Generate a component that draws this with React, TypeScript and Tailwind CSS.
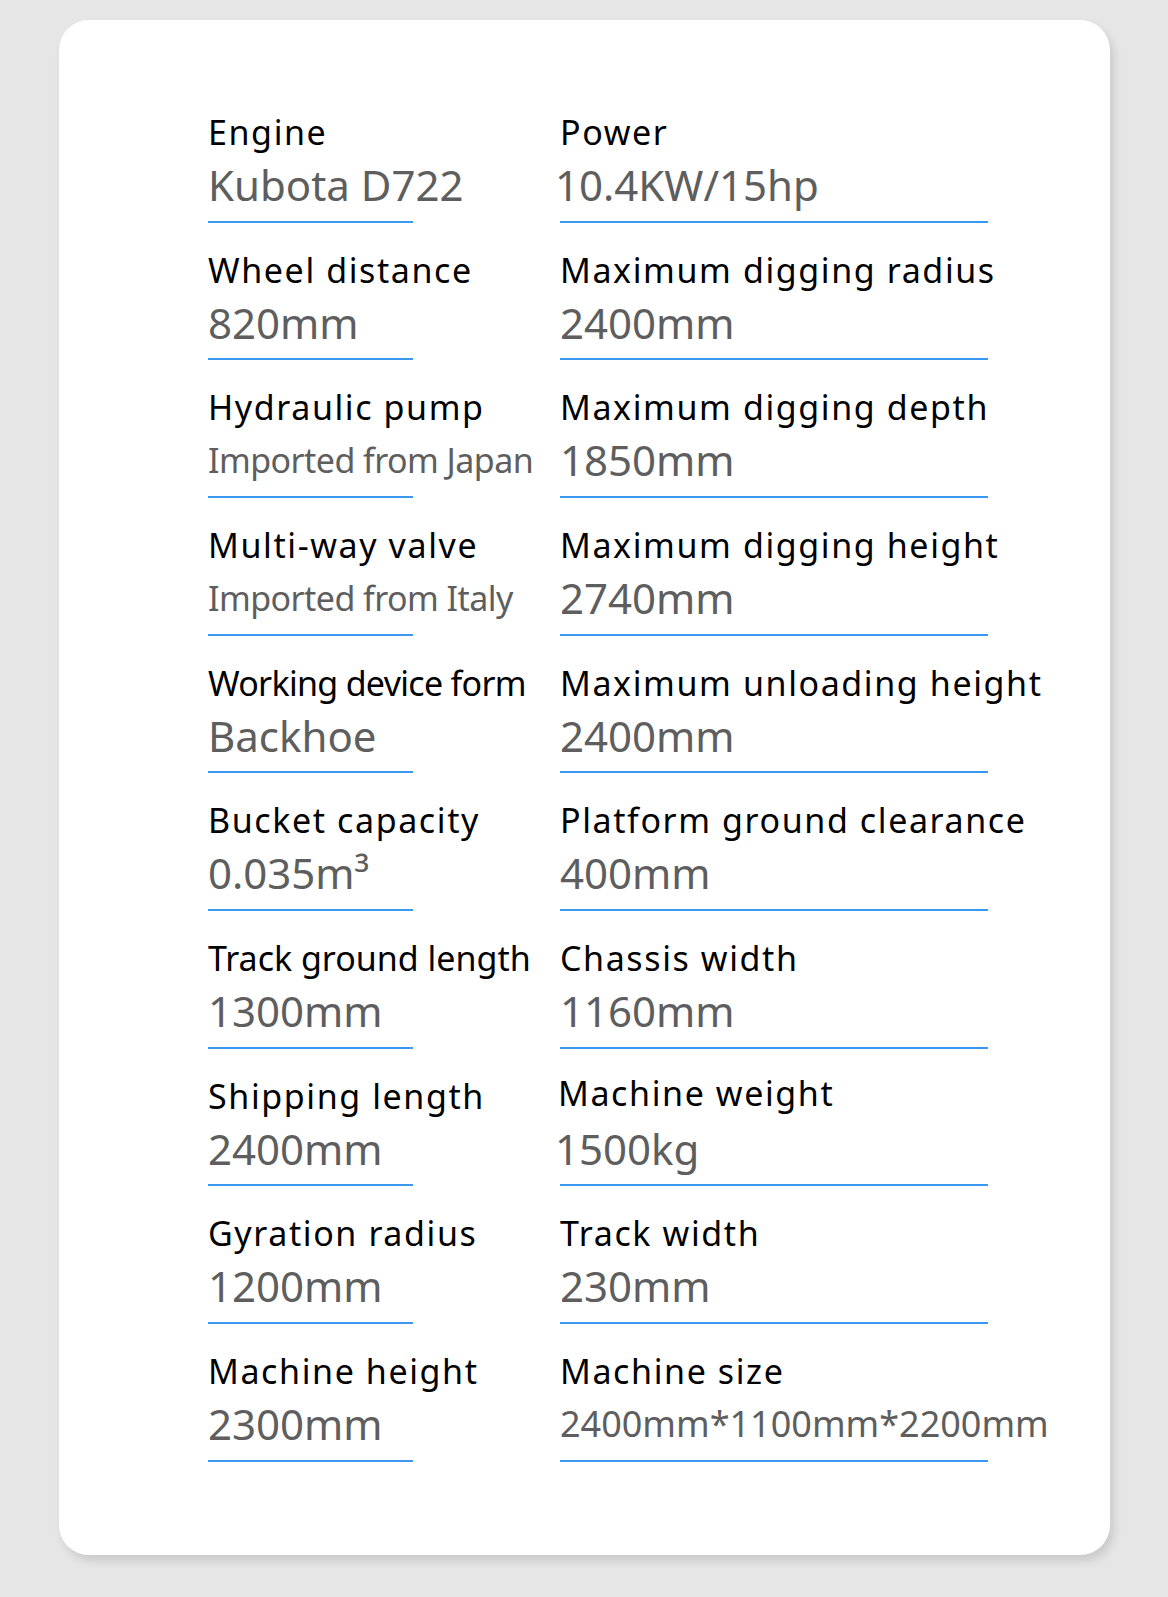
const SPECS = [
  { label: 'Engine', value: 'Kubota D722' },
  { label: 'Power', value: '10.4KW/15hp', valueCls: 'text-[42px] -ml-[5px]' },
  { label: 'Wheel distance', value: '820mm' },
  { label: 'Maximum digging radius', value: '2400mm' },
  { label: 'Hydraulic pump', value: 'Imported from Japan', valueCls: 'text-[34px] tracking-[-0.55px]' },
  { label: 'Maximum digging depth', value: '1850mm' },
  { label: 'Multi-way valve', value: 'Imported from Italy', valueCls: 'text-[34px] tracking-[-0.55px]' },
  { label: 'Maximum digging height', value: '2740mm' },
  { label: 'Working device form', value: 'Backhoe', labelCls: 'tracking-[-0.7px]' },
  { label: 'Maximum unloading height', value: '2400mm' },
  { label: 'Bucket capacity', value: '0.035m³' },
  { label: 'Platform ground clearance', value: '400mm' },
  { label: 'Track ground length', value: '1300mm', labelCls: 'tracking-[0px]' },
  { label: 'Chassis width', value: '1160mm' },
  { label: 'Shipping length', value: '2400mm' },
  { label: 'Machine weight', value: '1500kg', labelCls: 'tracking-[1.6px] -ml-[2px] -mt-[3px] mb-[3px]', valueCls: 'text-[42px] -ml-[5px]' },
  { label: 'Gyration radius', value: '1200mm' },
  { label: 'Track width', value: '230mm' },
  { label: 'Machine height', value: '2300mm' },
  { label: 'Machine size', value: '2400mm*1100mm*2200mm', valueCls: 'text-[36px] tracking-[0px]' },
]

function SpecCell({
  label,
  value,
  labelCls = 'tracking-[1.6px]',
  valueCls = 'text-[42px]',
  lineWidth,
}: {
  label: string
  value: string
  labelCls?: string
  valueCls?: string
  lineWidth: string
}) {
  return (
    <div className="flex h-[137.67px] flex-col pt-[27px]">
      <div className={`h-[40px] whitespace-nowrap text-[34px] leading-[40px] text-black ${labelCls}`}>{label}</div>
      <div className={`mt-[9px] h-[48px] whitespace-nowrap leading-[48px] text-[#5e5e5e] ${valueCls}`}>{value}</div>
      <div className={`mt-[11.7px] h-[2px] bg-[#3a98f2] ${lineWidth}`} />
    </div>
  )
}

export default function App() {
  return (
    <div className="h-[1597px] w-[1168px] overflow-hidden bg-[#e6e6e6] pt-[20px] font-['Noto_Sans',sans-serif]">
      <div className="ml-[59px] h-[1535px] w-[1051px] rounded-[30px] bg-white pl-[149px] pt-[65px] shadow-[4px_6px_10px_rgba(0,0,0,0.12)]">
        {/* two columns of specs, left narrow, right wide */}
        <div className="grid grid-cols-[352px_1fr]">
          {SPECS.map((s, i) => (
            <SpecCell
              key={s.label}
              label={s.label}
              value={s.value}
              labelCls={s.labelCls}
              valueCls={s.valueCls}
              lineWidth={i % 2 === 0 ? 'w-[205px]' : 'w-[428px]'}
            />
          ))}
        </div>
      </div>
    </div>
  )
}
